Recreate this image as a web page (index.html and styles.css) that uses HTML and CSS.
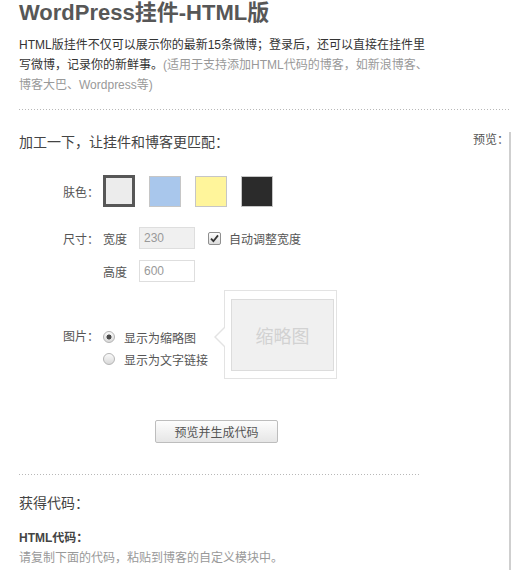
FILE: index.html
```html
<!DOCTYPE html>
<html lang="zh-CN">
<head>
<meta charset="utf-8">
<title>WordPress挂件-HTML版</title>
<link rel="stylesheet" href="styles.css">
</head>
<body>
<div class="page">
  <h1 class="title">WordPress挂件-HTML版</h1>
  <p class="intro"><span class="intro-main">HTML版挂件不仅可以展示你的最新15条微博；登录后，还可以直接在挂件里写微博，记录你的新鲜事。</span><span class="intro-note">(适用于支持添加HTML代码的博客，如新浪博客、博客大巴、Wordpress等)</span></p>
  <div class="dots"></div>
  <div class="main">
    <div class="settings">
      <h2 class="section-title">加工一下，让挂件和博客更匹配：</h2>
      <div class="form">
        <div class="row row-skin">
          <span class="label">肤色：</span>
          <div class="swatches">
            <span class="swatch swatch-grey selected"></span>
            <span class="swatch swatch-blue"></span>
            <span class="swatch swatch-yellow"></span>
            <span class="swatch swatch-black"></span>
          </div>
        </div>
        <div class="row row-size">
          <span class="label">尺寸：</span>
          <span class="field-name">宽度</span>
          <input class="num num-disabled" value="230" disabled>
          <label class="check"><span class="checkbox"><svg width="9" height="9" viewBox="0 0 9 9"><path d="M1 4.6 L3.4 7.2 L8 1.4" fill="none" stroke="#333" stroke-width="1.8"/></svg></span>自动调整宽度</label>
        </div>
        <div class="row row-height">
          <span class="label"></span>
          <span class="field-name">高度</span>
          <input class="num" value="600">
        </div>
        <div class="row row-image">
          <span class="label">图片：</span>
          <div class="options">
            <label class="opt"><span class="radio checked"></span>显示为缩略图</label>
            <label class="opt"><span class="radio"></span>显示为文字链接</label>
          </div>
          <div class="thumb-tip"><div class="thumb">缩略图</div></div>
        </div>
      </div>
      <div class="actions"><button class="btn" type="button">预览并生成代码</button></div>
      <div class="dots dots-short"></div>
      <h2 class="section-title code-title">获得代码：</h2>
      <h3 class="code-sub">HTML代码：</h3>
      <p class="hint">请复制下面的代码，粘贴到博客的自定义模块中。</p>
    </div>
    <div class="preview">
      <span class="preview-label">预览：</span>
      <div class="preview-frame"></div>
    </div>
  </div>
</div>
</body>
</html>
```
FILE: styles.css
```css
html, body {
  margin: 0;
  padding: 0;
  background: #fff;
}
body {
  font-family: "Liberation Sans", Arial, "Noto Sans CJK SC", sans-serif;
  font-size: 12px;
  color: #333;
  overflow: hidden;
}
.page {
  padding-left: 19px;
}
.title {
  margin: 0;
  font-size: 22px;
  line-height: 26px;
  font-weight: bold;
  color: #575757;
}
.intro {
  margin: 9px 0 0;
  width: 410px;
  line-height: 20px;
  font-size: 12px;
}
.intro-main { color: #333; }
.intro-note { color: #999; }
.dots {
  margin-top: 14px;
  height: 1px;
  background-image: linear-gradient(to right, #b8b8b8 1px, transparent 1px);
  background-size: 3px 1px;
}
.main {
  display: flex;
  margin-top: 22px;
}
.settings {
  width: 401px;
}
.section-title {
  margin: 0;
  font-size: 14px;
  line-height: 20px;
  font-weight: normal;
  color: #444;
}
.form {
  padding-left: 44px;
}
.row {
  display: flex;
  align-items: center;
  color: #555;
}
.label {
  width: 40px;
  flex: none;
}
.row-skin { margin-top: 23px; }
.swatches {
  display: flex;
  align-items: center;
  gap: 14px;
}
.swatch {
  display: block;
  box-sizing: border-box;
  width: 32px;
  height: 31px;
  border: 1px solid #c6c6c6;
}
.swatch.selected {
  width: 32px;
  height: 32px;
  border: 3px solid #575757;
}
.swatch-grey { background: #ececec; }
.swatch-blue { background: #a9c7ec; }
.swatch-yellow { background: #fff59b; }
.swatch-black { background: #2b2b2b; }

.row-size { margin-top: 20px; height: 22px; }
.row-height { margin-top: 11px; height: 22px; }
.field-name {
  width: 36px;
  flex: none;
}
.num {
  box-sizing: border-box;
  width: 56px;
  height: 22px;
  margin: 0;
  padding: 0 4px;
  border: 1px solid #dedede;
  background: #fff;
  font-family: "Liberation Sans", Arial, sans-serif;
  font-size: 12px;
  color: #999;
  outline: none;
}
.num-disabled {
  background: #f0f0f0;
  color: #999;
}
.check {
  display: flex;
  align-items: center;
  margin-left: 13px;
  color: #555;
}
.checkbox {
  box-sizing: border-box;
  width: 13px;
  height: 13px;
  margin-right: 8px;
  border: 1px solid #8f8f8f;
  border-radius: 2px;
  background: linear-gradient(#fdfdfd, #dcdcdc);
  display: flex;
  align-items: center;
  justify-content: center;
}
.checkbox svg { display: block; }

.row-image {
  position: relative;
  margin-top: 44px;
  align-items: flex-start;
}
.row-image .label { line-height: 22px; }
.options {
  display: flex;
  flex-direction: column;
}
.opt {
  display: flex;
  align-items: center;
  height: 22px;
  color: #555;
}
.radio {
  box-sizing: border-box;
  width: 12px;
  height: 12px;
  margin-right: 9px;
  border: 1px solid #b4b4b4;
  border-radius: 50%;
  background: linear-gradient(#fafafa, #d9d9d9);
}
.radio.checked {
  background: radial-gradient(circle, #4a4a4a 0 2.2px, transparent 2.8px), linear-gradient(#fafafa, #d9d9d9);
}
.thumb-tip {
  position: absolute;
  left: 161px;
  top: -36px;
  box-sizing: border-box;
  width: 113px;
  height: 89px;
  padding: 8px 0 0 6px;
  border: 1px solid #e3e3e3;
  background: #fff;
}
.thumb-tip::before,
.thumb-tip::after {
  content: "";
  position: absolute;
  width: 0;
  height: 0;
  border-style: solid;
  border-color: transparent;
}
.thumb-tip::before {
  left: -11px;
  top: 36px;
  border-width: 10px 10px 10px 0;
  border-right-color: #e3e3e3;
}
.thumb-tip::after {
  left: -9px;
  top: 37px;
  border-width: 9px 9px 9px 0;
  border-right-color: #fff;
}
.thumb {
  box-sizing: border-box;
  width: 103px;
  height: 72px;
  border: 1px solid #dcdcdc;
  background: #f0f0f0;
  color: #d2d2d2;
  font-size: 18px;
  display: flex;
  align-items: center;
  justify-content: center;
}

.actions {
  margin-top: 50px;
  padding-left: 136px;
}
.btn {
  box-sizing: border-box;
  width: 123px;
  height: 23px;
  margin: 0;
  padding: 0;
  border: 1px solid #bdbdbd;
  border-radius: 2px;
  background: linear-gradient(#fdfdfd, #e6e6e6);
  font-family: "Liberation Sans", Arial, "Noto Sans CJK SC", sans-serif;
  font-size: 12px;
  color: #555;
}
.dots-short { margin-top: 31px; }
.code-title { margin-top: 18px; }
.code-sub {
  margin: 15px 0 0;
  font-size: 12px;
  line-height: 20px;
  font-weight: bold;
  color: #444;
}
.hint {
  margin: 0;
  line-height: 20px;
  color: #999;
}
.preview {
  flex: 1;
  display: flex;
  justify-content: flex-end;
  align-items: flex-start;
}
.preview-label {
  line-height: 16px;
  color: #555;
}
.preview-frame {
  align-self: stretch;
  width: 0;
  margin-right: 0;
  border-left: 2px solid #cfcfcf;
  min-height: 440px;
}
```
